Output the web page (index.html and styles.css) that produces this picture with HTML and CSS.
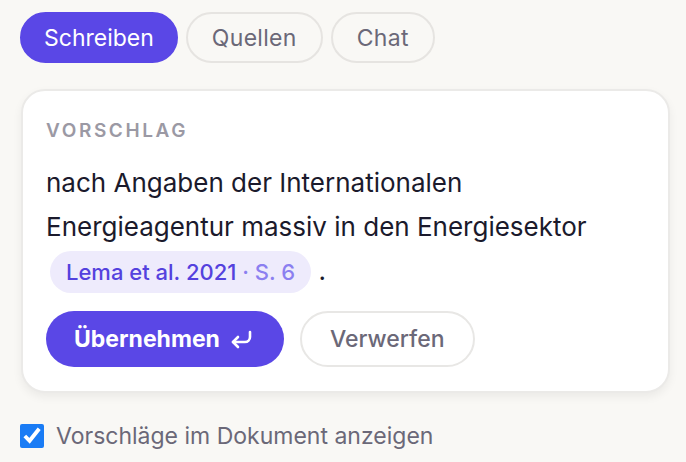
FILE: index.html
```html
<!DOCTYPE html>
<html lang="de">
<head>
<meta charset="utf-8">
<link rel="stylesheet" href="styles.css">
</head>
<body>
<div class="panel">
  <nav class="tabs">
    <button class="tab active">Schreiben</button>
    <button class="tab">Quellen</button>
    <button class="tab">Chat</button>
  </nav>
  <section class="card">
    <div class="label">VORSCHLAG</div>
    <p class="text">nach Angaben der Internationalen Energieagentur massiv in den Energiesektor <span class="chip">Lema et al. 2021 <span class="page">· S. 6</span></span> .</p>
    <div class="actions">
      <button class="btn primary">Übernehmen
        <svg class="ret" viewBox="0 0 24 24" width="24" height="24" fill="none" stroke="currentColor" stroke-width="2.6" stroke-linecap="round" stroke-linejoin="round"><polyline points="8 10 3 15 8 20"/><path d="M20 5v5a5 5 0 0 1-5 5H3"/></svg>
      </button>
      <button class="btn secondary">Verwerfen</button>
    </div>
  </section>
  <label class="toggle"><input type="checkbox" checked> Vorschläge im Dokument anzeigen</label>
</div>
</body>
</html>
```
FILE: styles.css
```css
* { box-sizing: border-box; }
html, body { margin: 0; padding: 0; }
body {
  background: #f9f8f5;
  font-family: Inter, "Noto Sans", sans-serif;
  width: 686px;
  height: 462px;
  overflow: hidden;
}
.panel { padding: 12px 16px 0 20px; }
.tabs { display: flex; gap: 8px; }
.tab {
  font-family: inherit;
  font-size: 23px;
  letter-spacing: 0.3px;
  height: 51px;
  padding: 0 24px;
  border-radius: 26px;
  border: 2px solid #e6e4e1;
  background: transparent;
  color: #6b6878;
}
.tab.active { background: #5a47e6; border-color: #5a47e6; color: #fff; padding: 0 22px; letter-spacing: 0; }
.card {
  margin-top: 26px;
  margin-left: 1px;
  background: #fff;
  border: 2px solid #ebeae8;
  border-radius: 24px;
  box-shadow: 0 4px 10px rgba(0,0,0,0.06);
  padding: 28px 24px 24px 23px;
}
.label {
  font-size: 19px;
  line-height: 24px;
  font-weight: 600;
  letter-spacing: 2.6px;
  color: #9b99a4;
}
.text {
  margin: 18px 0 0;
  font-size: 26px;
  line-height: 44px;
  color: #1b1a2c;
}
.chip {
  display: inline-block;
  background: #eeebfc;
  color: #5441de;
  font-size: 22px;
  font-weight: 500;
  line-height: 42px;
  padding: 0 16px;
  border-radius: 21px;
  margin-left: 4px;
}
.chip .page { color: #8b7ff0; }
.actions { display: flex; gap: 16px; margin-top: 18px; }
.btn {
  font-family: inherit;
  font-size: 23px;
  height: 56px;
  border-radius: 28px;
  display: inline-flex;
  align-items: center;
  gap: 10px;
}
.btn.primary { background: #5a47e6; border: 0; color: #fff; font-weight: 700; padding: 0 30px 0 28px; }
.btn.secondary { background: #fff; border: 2px solid #e8e7e5; color: #6b6878; font-weight: 500; padding: 0 28px; }
.toggle {
  display: flex;
  align-items: center;
  gap: 12px;
  margin-top: 29px;
  font-size: 23px;
  line-height: 28px;
  color: #6b6878;
}
.toggle input { width: 24px; height: 24px; margin: 0; accent-color: #1a7cf5; }
```
